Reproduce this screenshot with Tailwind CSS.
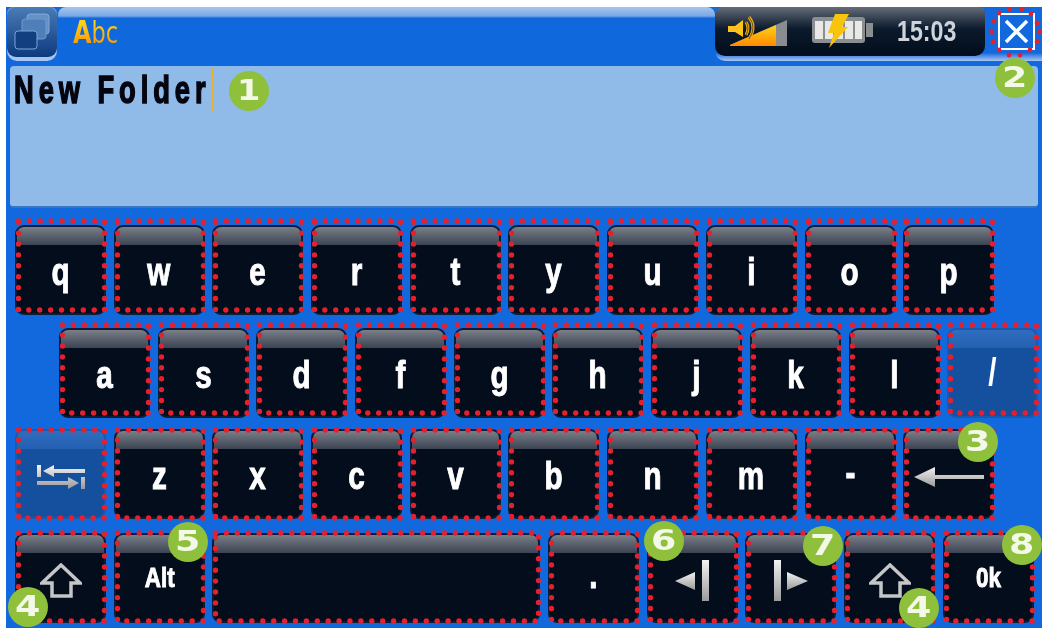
<!DOCTYPE html>
<html lang="en">
<head>
<meta charset="UTF-8">
<title>Keyboard</title>
<script src="https://cdn.jsdelivr.net/npm/@tailwindcss/browser@4"></script>
</head>
<body class="bg-white font-['Liberation_Sans',sans-serif]">
<!-- shared dotted outlines, one per keyboard row -->
<svg class="absolute w-0 h-0">
  <defs>
    <rect id="d1" x="3.5" y="-4" width="86" height="89" fill="none" stroke="#e5202e" stroke-width="5.4" stroke-linecap="round" stroke-dasharray="0 10.9"/>
    <rect id="d2" x="3.5" y="-3" width="86" height="88" fill="none" stroke="#e5202e" stroke-width="5.4" stroke-linecap="round" stroke-dasharray="0 10.9"/>
    <rect id="d3" x="3.5" y="1" width="86" height="88" fill="none" stroke="#e5202e" stroke-width="5.4" stroke-linecap="round" stroke-dasharray="0 10.9"/>
    <rect id="d4" x="3.5" y="0" width="86" height="88" fill="none" stroke="#e5202e" stroke-width="5.4" stroke-linecap="round" stroke-dasharray="0 10.9"/>
    <rect id="d5" x="3.5" y="0" width="323" height="88" fill="none" stroke="#e5202e" stroke-width="5.4" stroke-linecap="round" stroke-dasharray="0 10.9"/>
    <linearGradient id="o" x1="0" y1="0" x2="0" y2="1"><stop offset="0" stop-color="#ffd21a"/><stop offset="1" stop-color="#ff8a00"/></linearGradient>
    <linearGradient id="g" x1="0" y1="0" x2="0" y2="1"><stop offset="0" stop-color="#f2f2f2"/><stop offset="1" stop-color="#9a9a9a"/></linearGradient>
  </defs>
</svg>

<div class="relative ml-[6px] mt-[7px] w-[1036px] h-[621px] bg-[#1268dd] overflow-hidden">

  <!-- Top bar -->
  <header class="flex h-[59px]">
    <div class="w-[50px] h-[54px] ml-[1px] rounded-b-[10px] rounded-t-[6px] bg-linear-to-b from-[#5f92d6] to-[#a9c8ee] shrink-0">
      <div class="h-[50px] rounded-[9px] bg-linear-to-b from-[#4a7cb5] to-[#0b3a80] flex items-center justify-center">
        <svg width="40" height="40" viewBox="0 0 40 40">
          <rect x="15" y="2" width="22" height="20" rx="3" fill="#6592c6" stroke="#83a9d6"/>
          <rect x="10" y="7" width="24" height="20" rx="3" fill="#4e7fb9" stroke="#6f9bcc"/>
          <rect x="3" y="19" width="22" height="18" rx="3" fill="#123f80" stroke="#7ba4d3"/>
        </svg>
      </div>
    </div>
    <div class="flex-1 ml-[1px] rounded-t-[8px] bg-linear-to-b from-[#a6c6ee] from-[0px] via-[#7aa8e4] via-[9px] to-[#0f69dc] to-[11px] pl-[15px] pt-[8px]">
      <span class="inline-block origin-left scale-x-[.75] font-['DejaVu_Sans',sans-serif] text-[30px] leading-[34px] bg-linear-to-b from-[#ffe21a] to-[#ff8a00] bg-clip-text text-transparent"><b class="text-[32px]">A</b>bc</span>
    </div>
    <div class="w-[327px] h-[54px] shrink-0 rounded-bl-[10px] bg-linear-to-b from-[#1268dd] from-[46px] to-[#a6c6ee]">
      <div class="w-[270px] h-[49px] flex items-center rounded-b-[10px] rounded-tl-[8px] rounded-tr-[6px] bg-linear-to-b from-[#666d78] from-[0px] via-[#0b1a2c] via-[22px] to-[#030d1c] pl-[12px]">
        <svg class="overflow-visible" width="60" height="34" viewBox="0 0 60 34">
          <path d="M3 30 L60 5 V31 H3 Z" fill="#8a8d90"/>
          <path d="M3 30 L49 10 V31 H3 Z" fill="url(#o)"/>
          <path d="M1 11 H8 L16 5 V22 L8 17 H1 Z" fill="#ffc21a"/>
          <path d="M19 7 Q23 13 19 20 M22 2 Q30 12 22 24" fill="none" stroke="#f0b010" stroke-width="3"/>
          <path d="M19 7 Q23 13 19 20 M22 2 Q30 12 22 24" fill="none" stroke="#6d4a06" stroke-width="1"/>
        </svg>
        <svg class="ml-[25px] overflow-visible" width="63" height="34" viewBox="0 0 63 34">
          <rect x="0" y="2" width="53" height="26" rx="3" fill="#8b8e91"/>
          <path d="M3 6 H50 V24 H3 Z" fill="#e8e8e6"/>
          <path d="M12 6 V24 M22 6 V24 M32 6 V24 M42 6 V24" stroke="#8b8e91" stroke-width="2"/>
          <rect x="54" y="8" width="7" height="14" fill="#8b8e91"/>
          <path d="M23 -1 H37 L30 12 H36 L17 33 L22 18 H16 Z" fill="#f8c40c"/>
        </svg>
        <div class="ml-[22px] w-[60px] whitespace-nowrap"><span class="inline-block origin-left scale-x-[.8] text-[29px] font-bold text-[#cdd3da]">15:03</span></div>
      </div>
    </div>
  </header>

  <!-- Close button -->
  <div class="absolute left-[992px] top-[6px] w-[37px] h-[37px] border-2 border-white flex items-center justify-center">
    <svg width="25" height="25" viewBox="0 0 25 25"><path d="M2 2 L23 23 M23 2 L2 23" stroke="#fff" stroke-width="3.5"/></svg>
  </div>
  <svg class="absolute left-0 top-0 w-[1036px] h-[60px]" fill="#e5202e">
    <circle cx="1004" cy="2" r="2.4"/><circle cx="1016" cy="2" r="2.4"/><circle cx="993" cy="6" r="2.4"/><circle cx="1025" cy="7" r="2.4"/>
    <circle cx="988" cy="14" r="2.4"/><circle cx="1031" cy="16" r="2.4"/><circle cx="986" cy="25" r="2.4"/><circle cx="1033" cy="25" r="2.4"/>
    <circle cx="987" cy="35" r="2.4"/><circle cx="1031" cy="35" r="2.4"/><circle cx="993" cy="43" r="2.4"/><circle cx="1024" cy="43" r="2.4"/>
    <circle cx="1003" cy="48" r="2.4"/><circle cx="1014" cy="48" r="2.4"/>
  </svg>

  <!-- Text field -->
  <div class="h-[142px] mx-[4px] bg-[#90bae8] rounded-[4px] border-b-2 border-[#3a75bd] pl-[4px] pt-[2px]">
    <div class="flex items-start">
      <div class="w-[198px] whitespace-nowrap"><span class="inline-block origin-left scale-x-[.72] text-[38px] leading-[44px] font-bold text-[#050510] tracking-[6.8px] [-webkit-text-stroke:1.5px_#050510]">New Folder</span></div>
      <span class="w-[2px] h-[43px] bg-[#e6b030]"></span>
    </div>
  </div>

  <!-- Keyboard -->
  <main class="pl-[9px] text-white font-bold text-[38px] leading-none [-webkit-text-stroke:1px_white]">
    <div class="flex gap-[7.7px] mt-[17px]">
      <div class="relative w-[91px] h-[90px] rounded-[9px] border-2 border-[#0a1c38] bg-[#030d1c] flex flex-col"><div class="h-[18px] rounded-t-[7px] bg-linear-to-b from-[#7a7f88] to-[#3c4453]"></div><div class="flex-1 flex items-center justify-center pb-[15px]"><span class="inline-block scale-x-[.78]">q</span></div><svg class="absolute -left-[2px] -top-[2px] w-[91px] h-[90px] overflow-visible"><use href="#d1"/></svg></div>
      <div class="relative w-[91px] h-[90px] rounded-[9px] border-2 border-[#0a1c38] bg-[#030d1c] flex flex-col"><div class="h-[18px] rounded-t-[7px] bg-linear-to-b from-[#7a7f88] to-[#3c4453]"></div><div class="flex-1 flex items-center justify-center pb-[15px]"><span class="inline-block scale-x-[.78]">w</span></div><svg class="absolute -left-[2px] -top-[2px] w-[91px] h-[90px] overflow-visible"><use href="#d1"/></svg></div>
      <div class="relative w-[91px] h-[90px] rounded-[9px] border-2 border-[#0a1c38] bg-[#030d1c] flex flex-col"><div class="h-[18px] rounded-t-[7px] bg-linear-to-b from-[#7a7f88] to-[#3c4453]"></div><div class="flex-1 flex items-center justify-center pb-[15px]"><span class="inline-block scale-x-[.78]">e</span></div><svg class="absolute -left-[2px] -top-[2px] w-[91px] h-[90px] overflow-visible"><use href="#d1"/></svg></div>
      <div class="relative w-[91px] h-[90px] rounded-[9px] border-2 border-[#0a1c38] bg-[#030d1c] flex flex-col"><div class="h-[18px] rounded-t-[7px] bg-linear-to-b from-[#7a7f88] to-[#3c4453]"></div><div class="flex-1 flex items-center justify-center pb-[15px]"><span class="inline-block scale-x-[.78]">r</span></div><svg class="absolute -left-[2px] -top-[2px] w-[91px] h-[90px] overflow-visible"><use href="#d1"/></svg></div>
      <div class="relative w-[91px] h-[90px] rounded-[9px] border-2 border-[#0a1c38] bg-[#030d1c] flex flex-col"><div class="h-[18px] rounded-t-[7px] bg-linear-to-b from-[#7a7f88] to-[#3c4453]"></div><div class="flex-1 flex items-center justify-center pb-[15px]"><span class="inline-block scale-x-[.78]">t</span></div><svg class="absolute -left-[2px] -top-[2px] w-[91px] h-[90px] overflow-visible"><use href="#d1"/></svg></div>
      <div class="relative w-[91px] h-[90px] rounded-[9px] border-2 border-[#0a1c38] bg-[#030d1c] flex flex-col"><div class="h-[18px] rounded-t-[7px] bg-linear-to-b from-[#7a7f88] to-[#3c4453]"></div><div class="flex-1 flex items-center justify-center pb-[15px]"><span class="inline-block scale-x-[.78]">y</span></div><svg class="absolute -left-[2px] -top-[2px] w-[91px] h-[90px] overflow-visible"><use href="#d1"/></svg></div>
      <div class="relative w-[91px] h-[90px] rounded-[9px] border-2 border-[#0a1c38] bg-[#030d1c] flex flex-col"><div class="h-[18px] rounded-t-[7px] bg-linear-to-b from-[#7a7f88] to-[#3c4453]"></div><div class="flex-1 flex items-center justify-center pb-[15px]"><span class="inline-block scale-x-[.78]">u</span></div><svg class="absolute -left-[2px] -top-[2px] w-[91px] h-[90px] overflow-visible"><use href="#d1"/></svg></div>
      <div class="relative w-[91px] h-[90px] rounded-[9px] border-2 border-[#0a1c38] bg-[#030d1c] flex flex-col"><div class="h-[18px] rounded-t-[7px] bg-linear-to-b from-[#7a7f88] to-[#3c4453]"></div><div class="flex-1 flex items-center justify-center pb-[15px]"><span class="inline-block scale-x-[.78]">i</span></div><svg class="absolute -left-[2px] -top-[2px] w-[91px] h-[90px] overflow-visible"><use href="#d1"/></svg></div>
      <div class="relative w-[91px] h-[90px] rounded-[9px] border-2 border-[#0a1c38] bg-[#030d1c] flex flex-col"><div class="h-[18px] rounded-t-[7px] bg-linear-to-b from-[#7a7f88] to-[#3c4453]"></div><div class="flex-1 flex items-center justify-center pb-[15px]"><span class="inline-block scale-x-[.78]">o</span></div><svg class="absolute -left-[2px] -top-[2px] w-[91px] h-[90px] overflow-visible"><use href="#d1"/></svg></div>
      <div class="relative w-[91px] h-[90px] rounded-[9px] border-2 border-[#0a1c38] bg-[#030d1c] flex flex-col"><div class="h-[18px] rounded-t-[7px] bg-linear-to-b from-[#7a7f88] to-[#3c4453]"></div><div class="flex-1 flex items-center justify-center pb-[15px]"><span class="inline-block scale-x-[.78]">p</span></div><svg class="absolute -left-[2px] -top-[2px] w-[91px] h-[90px] overflow-visible"><use href="#d1"/></svg></div>
    </div>
    <div class="flex gap-[7.7px] mt-[13px] ml-[44px]">
      <div class="relative w-[91px] h-[90px] rounded-[9px] border-2 border-[#0a1c38] bg-[#030d1c] flex flex-col"><div class="h-[18px] rounded-t-[7px] bg-linear-to-b from-[#7a7f88] to-[#3c4453]"></div><div class="flex-1 flex items-center justify-center pb-[15px]"><span class="inline-block scale-x-[.78]">a</span></div><svg class="absolute -left-[2px] -top-[2px] w-[91px] h-[90px] overflow-visible"><use href="#d2"/></svg></div>
      <div class="relative w-[91px] h-[90px] rounded-[9px] border-2 border-[#0a1c38] bg-[#030d1c] flex flex-col"><div class="h-[18px] rounded-t-[7px] bg-linear-to-b from-[#7a7f88] to-[#3c4453]"></div><div class="flex-1 flex items-center justify-center pb-[15px]"><span class="inline-block scale-x-[.78]">s</span></div><svg class="absolute -left-[2px] -top-[2px] w-[91px] h-[90px] overflow-visible"><use href="#d2"/></svg></div>
      <div class="relative w-[91px] h-[90px] rounded-[9px] border-2 border-[#0a1c38] bg-[#030d1c] flex flex-col"><div class="h-[18px] rounded-t-[7px] bg-linear-to-b from-[#7a7f88] to-[#3c4453]"></div><div class="flex-1 flex items-center justify-center pb-[15px]"><span class="inline-block scale-x-[.78]">d</span></div><svg class="absolute -left-[2px] -top-[2px] w-[91px] h-[90px] overflow-visible"><use href="#d2"/></svg></div>
      <div class="relative w-[91px] h-[90px] rounded-[9px] border-2 border-[#0a1c38] bg-[#030d1c] flex flex-col"><div class="h-[18px] rounded-t-[7px] bg-linear-to-b from-[#7a7f88] to-[#3c4453]"></div><div class="flex-1 flex items-center justify-center pb-[15px]"><span class="inline-block scale-x-[.78]">f</span></div><svg class="absolute -left-[2px] -top-[2px] w-[91px] h-[90px] overflow-visible"><use href="#d2"/></svg></div>
      <div class="relative w-[91px] h-[90px] rounded-[9px] border-2 border-[#0a1c38] bg-[#030d1c] flex flex-col"><div class="h-[18px] rounded-t-[7px] bg-linear-to-b from-[#7a7f88] to-[#3c4453]"></div><div class="flex-1 flex items-center justify-center pb-[15px]"><span class="inline-block scale-x-[.78]">g</span></div><svg class="absolute -left-[2px] -top-[2px] w-[91px] h-[90px] overflow-visible"><use href="#d2"/></svg></div>
      <div class="relative w-[91px] h-[90px] rounded-[9px] border-2 border-[#0a1c38] bg-[#030d1c] flex flex-col"><div class="h-[18px] rounded-t-[7px] bg-linear-to-b from-[#7a7f88] to-[#3c4453]"></div><div class="flex-1 flex items-center justify-center pb-[15px]"><span class="inline-block scale-x-[.78]">h</span></div><svg class="absolute -left-[2px] -top-[2px] w-[91px] h-[90px] overflow-visible"><use href="#d2"/></svg></div>
      <div class="relative w-[91px] h-[90px] rounded-[9px] border-2 border-[#0a1c38] bg-[#030d1c] flex flex-col"><div class="h-[18px] rounded-t-[7px] bg-linear-to-b from-[#7a7f88] to-[#3c4453]"></div><div class="flex-1 flex items-center justify-center pb-[15px]"><span class="inline-block scale-x-[.78]">j</span></div><svg class="absolute -left-[2px] -top-[2px] w-[91px] h-[90px] overflow-visible"><use href="#d2"/></svg></div>
      <div class="relative w-[91px] h-[90px] rounded-[9px] border-2 border-[#0a1c38] bg-[#030d1c] flex flex-col"><div class="h-[18px] rounded-t-[7px] bg-linear-to-b from-[#7a7f88] to-[#3c4453]"></div><div class="flex-1 flex items-center justify-center pb-[15px]"><span class="inline-block scale-x-[.78]">k</span></div><svg class="absolute -left-[2px] -top-[2px] w-[91px] h-[90px] overflow-visible"><use href="#d2"/></svg></div>
      <div class="relative w-[91px] h-[90px] rounded-[9px] border-2 border-[#0a1c38] bg-[#030d1c] flex flex-col"><div class="h-[18px] rounded-t-[7px] bg-linear-to-b from-[#7a7f88] to-[#3c4453]"></div><div class="flex-1 flex items-center justify-center pb-[15px]"><span class="inline-block scale-x-[.78]">l</span></div><svg class="absolute -left-[2px] -top-[2px] w-[91px] h-[90px] overflow-visible"><use href="#d2"/></svg></div>
      <div class="relative w-[91px] h-[90px] rounded-[9px] border-2 border-[#1a5aad] bg-[#15509f] flex flex-col"><div class="h-[18px] rounded-t-[7px] bg-linear-to-b from-[#2f6dc0] to-[#2460b0]"></div><div class="flex-1 flex items-center justify-center pb-5"><span class="inline-block scale-x-[.78] [-webkit-text-stroke:0px_white]">/</span></div><svg class="absolute -left-[2px] -top-[2px] w-[91px] h-[90px] overflow-visible"><use href="#d2"/></svg></div>
    </div>
    <div class="flex gap-[7.7px] mt-[11px]">
      <div class="relative w-[91px] h-[90px] rounded-[9px] border-2 border-[#1a5aad] bg-[#15509f] flex flex-col"><div class="h-[18px] rounded-t-[7px] bg-linear-to-b from-[#2f6dc0] to-[#2460b0]"></div><div class="flex-1 flex items-center justify-center pb-[12px]">
        <svg width="50" height="26" viewBox="0 0 50 26" fill="url(#g)"><path d="M1 1 H5 V13 H1 Z M7 7 L18 1 V5 H49 V9 H18 V13 Z M45 13 H49 V25 H45 Z M43 19 L32 13 V17 H1 V21 H32 V25 Z"/></svg>
      </div><svg class="absolute -left-[2px] -top-[2px] w-[91px] h-[90px] overflow-visible"><use href="#d3"/></svg></div>
      <div class="relative w-[91px] h-[90px] rounded-[9px] border-2 border-[#0a1c38] bg-[#030d1c] flex flex-col"><div class="h-[18px] rounded-t-[7px] bg-linear-to-b from-[#7a7f88] to-[#3c4453]"></div><div class="flex-1 flex items-center justify-center pb-[15px]"><span class="inline-block scale-x-[.78]">z</span></div><svg class="absolute -left-[2px] -top-[2px] w-[91px] h-[90px] overflow-visible"><use href="#d3"/></svg></div>
      <div class="relative w-[91px] h-[90px] rounded-[9px] border-2 border-[#0a1c38] bg-[#030d1c] flex flex-col"><div class="h-[18px] rounded-t-[7px] bg-linear-to-b from-[#7a7f88] to-[#3c4453]"></div><div class="flex-1 flex items-center justify-center pb-[15px]"><span class="inline-block scale-x-[.78]">x</span></div><svg class="absolute -left-[2px] -top-[2px] w-[91px] h-[90px] overflow-visible"><use href="#d3"/></svg></div>
      <div class="relative w-[91px] h-[90px] rounded-[9px] border-2 border-[#0a1c38] bg-[#030d1c] flex flex-col"><div class="h-[18px] rounded-t-[7px] bg-linear-to-b from-[#7a7f88] to-[#3c4453]"></div><div class="flex-1 flex items-center justify-center pb-[15px]"><span class="inline-block scale-x-[.78]">c</span></div><svg class="absolute -left-[2px] -top-[2px] w-[91px] h-[90px] overflow-visible"><use href="#d3"/></svg></div>
      <div class="relative w-[91px] h-[90px] rounded-[9px] border-2 border-[#0a1c38] bg-[#030d1c] flex flex-col"><div class="h-[18px] rounded-t-[7px] bg-linear-to-b from-[#7a7f88] to-[#3c4453]"></div><div class="flex-1 flex items-center justify-center pb-[15px]"><span class="inline-block scale-x-[.78]">v</span></div><svg class="absolute -left-[2px] -top-[2px] w-[91px] h-[90px] overflow-visible"><use href="#d3"/></svg></div>
      <div class="relative w-[91px] h-[90px] rounded-[9px] border-2 border-[#0a1c38] bg-[#030d1c] flex flex-col"><div class="h-[18px] rounded-t-[7px] bg-linear-to-b from-[#7a7f88] to-[#3c4453]"></div><div class="flex-1 flex items-center justify-center pb-[15px]"><span class="inline-block scale-x-[.78]">b</span></div><svg class="absolute -left-[2px] -top-[2px] w-[91px] h-[90px] overflow-visible"><use href="#d3"/></svg></div>
      <div class="relative w-[91px] h-[90px] rounded-[9px] border-2 border-[#0a1c38] bg-[#030d1c] flex flex-col"><div class="h-[18px] rounded-t-[7px] bg-linear-to-b from-[#7a7f88] to-[#3c4453]"></div><div class="flex-1 flex items-center justify-center pb-[15px]"><span class="inline-block scale-x-[.78]">n</span></div><svg class="absolute -left-[2px] -top-[2px] w-[91px] h-[90px] overflow-visible"><use href="#d3"/></svg></div>
      <div class="relative w-[91px] h-[90px] rounded-[9px] border-2 border-[#0a1c38] bg-[#030d1c] flex flex-col"><div class="h-[18px] rounded-t-[7px] bg-linear-to-b from-[#7a7f88] to-[#3c4453]"></div><div class="flex-1 flex items-center justify-center pb-[15px]"><span class="inline-block scale-x-[.78]">m</span></div><svg class="absolute -left-[2px] -top-[2px] w-[91px] h-[90px] overflow-visible"><use href="#d3"/></svg></div>
      <div class="relative w-[91px] h-[90px] rounded-[9px] border-2 border-[#0a1c38] bg-[#030d1c] flex flex-col"><div class="h-[18px] rounded-t-[7px] bg-linear-to-b from-[#7a7f88] to-[#3c4453]"></div><div class="flex-1 flex items-center justify-center pb-5"><span class="inline-block scale-x-[.78]">-</span></div><svg class="absolute -left-[2px] -top-[2px] w-[91px] h-[90px] overflow-visible"><use href="#d3"/></svg></div>
      <div class="relative w-[91px] h-[90px] rounded-[9px] border-2 border-[#0a1c38] bg-[#030d1c] flex flex-col"><div class="h-[18px] rounded-t-[7px] bg-linear-to-b from-[#7a7f88] to-[#3c4453]"></div><div class="flex-1 flex items-center justify-center pb-[12px]">
        <svg width="70" height="20" viewBox="0 0 70 20" fill="url(#g)"><path d="M0 10 L21 0 V8 H70 V12 H21 V20 Z"/></svg>
      </div><svg class="absolute -left-[2px] -top-[2px] w-[91px] h-[90px] overflow-visible"><use href="#d3"/></svg></div>
    </div>
    <div class="flex gap-[7.7px] mt-[14px] text-[28px]">
      <div class="relative w-[91px] h-[90px] rounded-[9px] border-2 border-[#0a1c38] bg-[#030d1c] flex flex-col"><div class="h-[18px] rounded-t-[7px] bg-linear-to-b from-[#7a7f88] to-[#3c4453]"></div><div class="flex-1 flex items-center justify-center pb-[14px]">
        <svg width="42" height="35" viewBox="0 0 42 35" fill="none" stroke="#c4c6c8" stroke-width="3.5"><path d="M21 2 L40 20 H31 V33 H12 V20 H2 Z"/></svg>
      </div><svg class="absolute -left-[2px] -top-[2px] w-[91px] h-[90px] overflow-visible"><use href="#d4"/></svg></div>
      <div class="relative w-[91px] h-[90px] rounded-[9px] border-2 border-[#0a1c38] bg-[#030d1c] flex flex-col"><div class="h-[18px] rounded-t-[7px] bg-linear-to-b from-[#7a7f88] to-[#3c4453]"></div><div class="flex-1 flex items-center justify-center pb-[18px]"><span class="inline-block scale-x-[.8]">Alt</span></div><svg class="absolute -left-[2px] -top-[2px] w-[91px] h-[90px] overflow-visible"><use href="#d4"/></svg></div>
      <div class="relative w-[328px] h-[90px] rounded-[9px] border-2 border-[#0a1c38] bg-[#030d1c] flex flex-col"><div class="h-[18px] rounded-t-[7px] bg-linear-to-b from-[#7a7f88] to-[#3c4453]"></div><svg class="absolute -left-[2px] -top-[2px] w-[328px] h-[90px] overflow-visible"><use href="#d5"/></svg></div>
      <div class="relative w-[91px] h-[90px] rounded-[9px] border-2 border-[#0a1c38] bg-[#030d1c] flex flex-col"><div class="h-[18px] rounded-t-[7px] bg-linear-to-b from-[#7a7f88] to-[#3c4453]"></div><div class="flex-1 flex items-center justify-center pb-[24px] text-[38px]"><span class="inline-block scale-x-[.78]">.</span></div><svg class="absolute -left-[2px] -top-[2px] w-[91px] h-[90px] overflow-visible"><use href="#d4"/></svg></div>
      <div class="relative w-[91px] h-[90px] rounded-[9px] border-2 border-[#0a1c38] bg-[#030d1c] flex flex-col"><div class="h-[18px] rounded-t-[7px] bg-linear-to-b from-[#7a7f88] to-[#3c4453]"></div><div class="flex-1 flex items-center justify-center pb-[14px]">
        <svg width="34" height="41" viewBox="0 0 34 41"><path d="M0 21 L20 12 V30 Z" fill="url(#g)"/><rect x="27" y="0" width="7" height="41" fill="url(#g)"/></svg>
      </div><svg class="absolute -left-[2px] -top-[2px] w-[91px] h-[90px] overflow-visible"><use href="#d4"/></svg></div>
      <div class="relative w-[91px] h-[90px] rounded-[9px] border-2 border-[#0a1c38] bg-[#030d1c] flex flex-col"><div class="h-[18px] rounded-t-[7px] bg-linear-to-b from-[#7a7f88] to-[#3c4453]"></div><div class="flex-1 flex items-center justify-center pb-[14px]">
        <svg width="34" height="41" viewBox="0 0 34 41"><rect x="0" y="0" width="7" height="41" fill="url(#g)"/><path d="M34 21 L13 12 V30 Z" fill="url(#g)"/></svg>
      </div><svg class="absolute -left-[2px] -top-[2px] w-[91px] h-[90px] overflow-visible"><use href="#d4"/></svg></div>
      <div class="relative w-[91px] h-[90px] rounded-[9px] border-2 border-[#0a1c38] bg-[#030d1c] flex flex-col"><div class="h-[18px] rounded-t-[7px] bg-linear-to-b from-[#7a7f88] to-[#3c4453]"></div><div class="flex-1 flex items-center justify-center pb-[14px]">
        <svg width="42" height="35" viewBox="0 0 42 35" fill="none" stroke="#c4c6c8" stroke-width="3.5"><path d="M21 2 L40 20 H31 V33 H12 V20 H2 Z"/></svg>
      </div><svg class="absolute -left-[2px] -top-[2px] w-[91px] h-[90px] overflow-visible"><use href="#d4"/></svg></div>
      <div class="relative w-[91px] h-[90px] rounded-[9px] border-2 border-[#0a1c38] bg-[#030d1c] flex flex-col"><div class="h-[18px] rounded-t-[7px] bg-linear-to-b from-[#7a7f88] to-[#3c4453]"></div><div class="flex-1 flex items-center justify-center pb-[18px]"><span class="inline-block scale-x-[.8]">0k</span></div><svg class="absolute -left-[2px] -top-[2px] w-[91px] h-[90px] overflow-visible"><use href="#d4"/></svg></div>
    </div>
  </main>

  <!-- Numbered callouts -->
  <div class="absolute left-[223px] top-[64px] w-[40px] h-[40px] rounded-full bg-[#8fc03c] flex items-center justify-center font-['DejaVu_Sans',sans-serif] font-bold text-[28px] text-[#f4f8e8]"><span class="inline-block scale-x-[1.2]">1</span></div>
  <div class="absolute left-[989px] top-[51px] w-[40px] h-[40px] rounded-full bg-[#8fc03c] flex items-center justify-center font-['DejaVu_Sans',sans-serif] font-bold text-[28px] text-[#f4f8e8]"><span class="inline-block scale-x-[1.3]">2</span></div>
  <div class="absolute left-[952px] top-[415px] w-[40px] h-[40px] rounded-full bg-[#8fc03c] flex items-center justify-center font-['DejaVu_Sans',sans-serif] font-bold text-[28px] text-[#f4f8e8]"><span class="inline-block scale-x-[1.3]">3</span></div>
  <div class="absolute left-[2px] top-[580px] w-[40px] h-[40px] rounded-full bg-[#8fc03c] flex items-center justify-center font-['DejaVu_Sans',sans-serif] font-bold text-[28px] text-[#f4f8e8]"><span class="inline-block scale-x-[1.3]">4</span></div>
  <div class="absolute left-[893px] top-[581px] w-[40px] h-[40px] rounded-full bg-[#8fc03c] flex items-center justify-center font-['DejaVu_Sans',sans-serif] font-bold text-[28px] text-[#f4f8e8]"><span class="inline-block scale-x-[1.3]">4</span></div>
  <div class="absolute left-[162px] top-[515px] w-[40px] h-[40px] rounded-full bg-[#8fc03c] flex items-center justify-center font-['DejaVu_Sans',sans-serif] font-bold text-[28px] text-[#f4f8e8]"><span class="inline-block scale-x-[1.3]">5</span></div>
  <div class="absolute left-[638px] top-[514px] w-[40px] h-[40px] rounded-full bg-[#8fc03c] flex items-center justify-center font-['DejaVu_Sans',sans-serif] font-bold text-[28px] text-[#f4f8e8]"><span class="inline-block scale-x-[1.3]">6</span></div>
  <div class="absolute left-[797px] top-[519px] w-[40px] h-[40px] rounded-full bg-[#8fc03c] flex items-center justify-center font-['DejaVu_Sans',sans-serif] font-bold text-[28px] text-[#f4f8e8]"><span class="inline-block scale-x-[1.3]">7</span></div>
  <div class="absolute left-[996px] top-[518px] w-[40px] h-[40px] rounded-full bg-[#8fc03c] flex items-center justify-center font-['DejaVu_Sans',sans-serif] font-bold text-[28px] text-[#f4f8e8]"><span class="inline-block scale-x-[1.3]">8</span></div>
</div>
</body>
</html>
